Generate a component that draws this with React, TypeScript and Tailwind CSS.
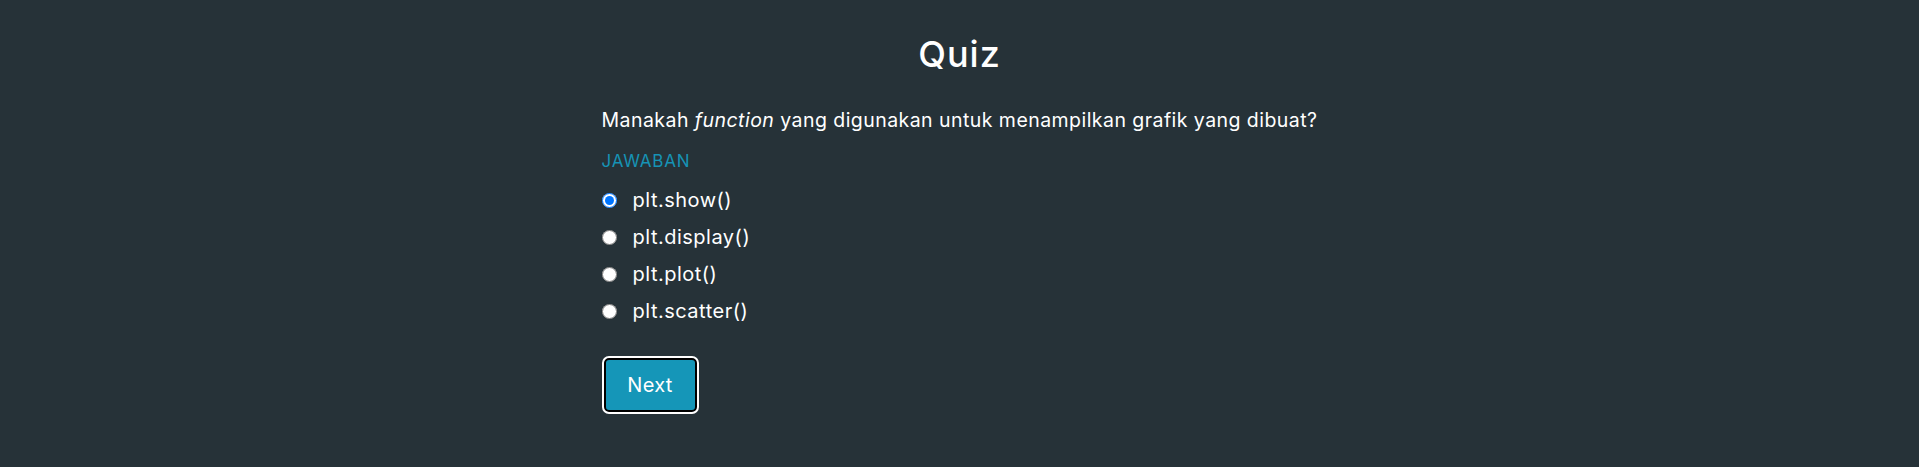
import { useState } from "react";

const options = ["plt.show()", "plt.display()", "plt.plot()", "plt.scatter()"];

export default function App() {
  const [answer, setAnswer] = useState(0);

  return (
    <div className="min-h-[467px] w-full bg-[#263238] font-['Inter',sans-serif] text-white">
      <div className="mx-auto w-[716px] pt-[32px]">
        <h1 className="text-center text-[36px] font-medium leading-[44px] tracking-[1px]">
          Quiz
        </h1>

        <p className="mt-[32px] text-[19.5px] leading-[24px] tracking-[0.45px]">
          Manakah <em>function</em> yang digunakan untuk menampilkan grafik
          yang dibuat?
        </p>

        <p className="mt-[18px] text-[17px] leading-[22px] tracking-[0.8px] text-[#1693b5]">
          JAWABAN
        </p>

        <div className="mt-[16px] flex flex-col gap-[12px]">
          {options.map((opt, i) => (
            <label key={opt} className="flex h-[25px] items-center gap-[16px]">
              <input
                type="radio"
                name="jawaban"
                checked={answer === i}
                onChange={() => setAnswer(i)}
                className="m-0 h-[15px] w-[15px]"
              />
              <span className="text-[20px] leading-[25px] tracking-[0.5px]">
                {opt}
              </span>
            </label>
          ))}
        </div>

        <button className="mt-[34px] ml-[2px] h-[54px] w-[93px] rounded-[5px] border-2 border-black bg-[#1596b8] text-[20px] tracking-[0.3px] text-white outline-2 outline-offset-0 outline-white">
          Next
        </button>
      </div>
    </div>
  );
}
